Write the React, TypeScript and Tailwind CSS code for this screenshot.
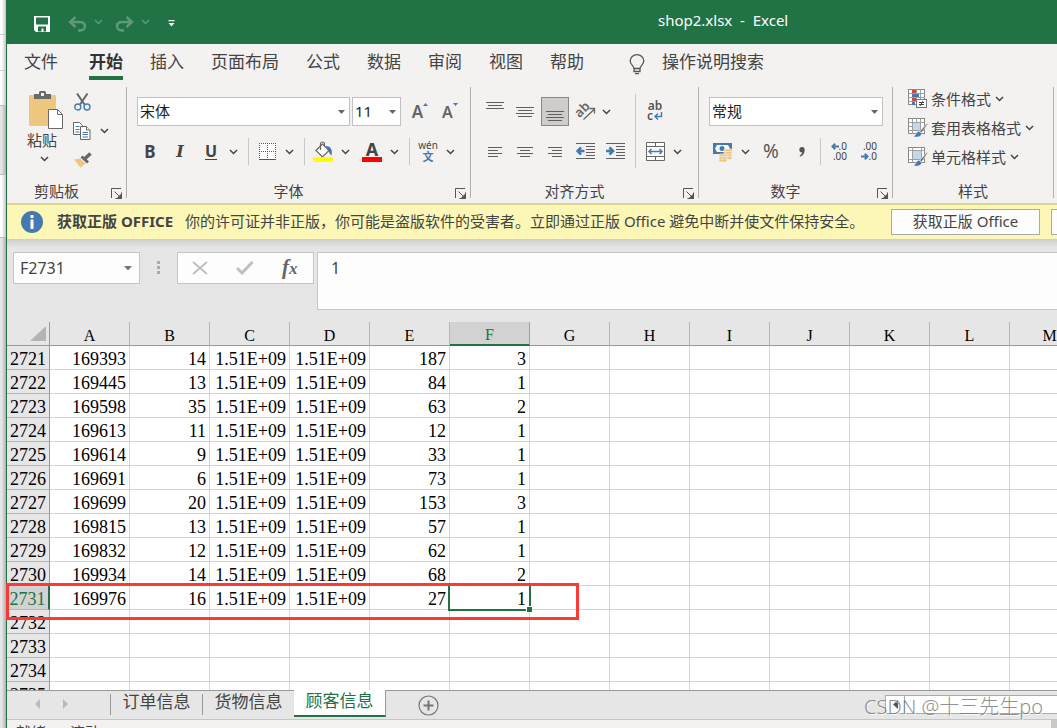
import React from "react";

type Kids = { children?: React.ReactNode };

const COLS = ["A", "B", "C", "D", "E", "F", "G", "H", "I", "J", "K", "L", "M"];

const ROWS: { n: number; v: string[] }[] = [
  { n: 2721, v: ["169393", "14", "1.51E+09", "1.51E+09", "187", "3"] },
  { n: 2722, v: ["169445", "13", "1.51E+09", "1.51E+09", "84", "1"] },
  { n: 2723, v: ["169598", "35", "1.51E+09", "1.51E+09", "63", "2"] },
  { n: 2724, v: ["169613", "11", "1.51E+09", "1.51E+09", "12", "1"] },
  { n: 2725, v: ["169614", "9", "1.51E+09", "1.51E+09", "33", "1"] },
  { n: 2726, v: ["169691", "6", "1.51E+09", "1.51E+09", "73", "1"] },
  { n: 2727, v: ["169699", "20", "1.51E+09", "1.51E+09", "153", "3"] },
  { n: 2728, v: ["169815", "13", "1.51E+09", "1.51E+09", "57", "1"] },
  { n: 2729, v: ["169832", "12", "1.51E+09", "1.51E+09", "62", "1"] },
  { n: 2730, v: ["169934", "14", "1.51E+09", "1.51E+09", "68", "2"] },
  { n: 2731, v: ["169976", "16", "1.51E+09", "1.51E+09", "27", "1"] },
  { n: 2732, v: [] },
  { n: 2733, v: [] },
  { n: 2734, v: [] },
  { n: 2735, v: [] },
];

const TABS = ["开始", "插入", "页面布局", "公式", "数据", "审阅", "视图", "帮助"];

function ChevronMark({ className = "text-[#444]" }: { className?: string }) {
  return (
    <svg width="9" height="6" viewBox="0 0 9 6" fill="none" stroke="currentColor" strokeWidth="1.5" className={className}>
      <path d="M1 1l3.5 3.5L8 1" />
    </svg>
  );
}

function Chev({ label }: { label: string }) {
  return (
    <button aria-label={label} className="flex h-[29px] w-3 shrink-0 items-center justify-center">
      <ChevronMark />
    </button>
  );
}

function Tool({ label, wide, children }: Kids & { label: string; wide?: boolean }) {
  return (
    <button
      aria-label={label}
      className={
        wide
          ? "flex h-[29px] w-8 shrink-0 items-center justify-center"
          : "flex h-[29px] w-[30px] shrink-0 items-center justify-center"
      }
    >
      {children}
    </button>
  );
}

function Split({ label, children }: Kids & { label: string }) {
  return (
    <div className="flex shrink-0">
      <Tool label={label} wide>
        {children}
      </Tool>
      <Chev label={label + "选项"} />
    </div>
  );
}

function Sep() {
  return <div className="h-[27px] w-px shrink-0 bg-[#c8c8c8]" />;
}

function Group({ title, width, launcher = true, children }: Kids & { title: string; width: string; launcher?: boolean }) {
  return (
    <section className={"flex h-[111px] shrink-0 flex-col border-r border-[#b2b0ae] " + width}>
      {children}
      <div className="mt-auto flex h-[13px] items-center text-[15px] leading-[15px]">
        <span className="flex-1 text-center">{title}</span>
        {launcher && (
          <button aria-label={title + "设置"} className="flex w-5 justify-center pt-[3px]">
            <svg width="11" height="11" viewBox="0 0 11 11" fill="none" stroke="#555" strokeWidth="1">
              <path d="M.5 10V.5H10M3.5 3.5l6 6M10.500 4.500v6h-6" />
              <path d="M6 10.500h4.500V6z" fill="#555" />
            </svg>
          </button>
        )}
      </div>
    </section>
  );
}

function Combo({ label, value, width }: { label: string; value: string; width: string }) {
  return (
    <div className={"relative h-[29px] shrink-0 " + width}>
      <select
        aria-label={label}
        className="h-full w-full appearance-none border border-[#c3c1bf] bg-white pl-[2px] text-[15px] text-[#1e1e1e] outline-none"
      >
        <option>{value}</option>
      </select>
      <svg width="7" height="4" viewBox="0 0 7 4" className="pointer-events-none absolute right-[5px] top-[13px]">
        <path d="M0 0h7L3.500 4z" fill="#666" />
      </svg>
    </div>
  );
}

function Lines({ rows, width, height }: { rows: [number, number, number][]; width: number; height: number }) {
  return (
    <svg width={width} height={height} viewBox={`0 0 ${width} ${height}`} shapeRendering="crispEdges">
      {rows.map(([x, y, w]) => (
        <rect key={y} x={x} y={y} width={w} height="1" fill="#5f5f5f" />
      ))}
    </svg>
  );
}

function Indent({ right }: { right?: boolean }) {
  return (
    <svg width="19" height="17" viewBox="0 0 19 17">
      <g fill="#5f5f5f" shapeRendering="crispEdges">
        <rect x="0" y="0" width="19" height="1" />
        <rect x="10" y="3" width="9" height="1" />
        <rect x="10" y="6" width="9" height="1" />
        <rect x="10" y="9" width="9" height="1" />
        <rect x="10" y="12" width="9" height="1" />
        <rect x="0" y="15" width="19" height="1" />
      </g>
      <path
        d={right ? "M0 8h6M3.500 4.500L7 8l-3.500 3.500" : "M8.500 8H2.500M5 4.500L1.500 8 5 11.500"}
        fill="none"
        stroke="#4579b2"
        strokeWidth="2.600"
      />
    </svg>
  );
}

function GridIcon({ kind }: { kind: "cond" | "table" | "cell" }) {
  return (
    <svg width="20" height="20" viewBox="0 0 20 20" className="shrink-0">
      <rect x=".5" y=".5" width="16" height="15" fill="#fff" stroke="#888" />
      {kind === "cond" ? (
        <g>
          <path d="M.5 4.500h16M.5 8.500h16M.5 12.500h16M4.500 .5v15M8.500 .5v15M12.500 .5v15" stroke="#a0a0a0" />
          <rect x="4" y="1" width="4" height="3" fill="#d1492e" />
          <rect x="4" y="5" width="7" height="3" fill="#4579b2" />
          <rect x="4" y="9" width="4" height="3" fill="#d1492e" />
          <rect x="4" y="13" width="3" height="3" fill="#4579b2" />
          <rect x="8.500" y="10.500" width="10" height="8" fill="#fff" stroke="#777" />
          <path d="M11 13.500h5M11 15.500h5M15 12l-3 5" stroke="#444" />
        </g>
      ) : (
        <g>
          {kind === "table" ? (
            <g>
              <rect x="5" y="5" width="8" height="8" fill="#c3d8ee" />
              <path d="M.5 4.500h16M.5 8.500h4M.5 12.500h16M4.500 .5v15M8.500 .5v4M12.500 .5v15" stroke="#a0a0a0" />
            </g>
          ) : (
            <g>
              <path d="M.5 3.500h16M.5 12.500h16M4.500 .5v15M13.500 .5v15" stroke="#a0a0a0" />
              <rect x="5" y="4" width="8" height="8" fill="#c3d8ee" />
            </g>
          )}
          <path d="M19.200 5.200l-7.400 8 1.700 1.600 6-8.600z" fill="#666" stroke="#f3f2f1" strokeWidth=".6" />
          <path d="M11 13.200c-3 0-2.500 4-5.500 5.300 3 1.300 8.300.5 8-3.200z" fill="#4579b2" stroke="#f3f2f1" strokeWidth=".5" />
        </g>
      )}
    </svg>
  );
}

function StyleButton({ kind, text }: { kind: "cond" | "table" | "cell"; text: string }) {
  return (
    <button className="flex h-6 items-center text-[15px]">
      <GridIcon kind={kind} />
      <span className="ml-[3px] mr-1">{text}</span>
      <ChevronMark />
    </button>
  );
}

function TitleBar() {
  return (
    <header className="flex h-11 shrink-0 items-center bg-[#217346]">
      <div className="flex w-[651px] shrink-0 items-center pl-[27px] pt-[3px]">
        <button aria-label="保存">
          <svg width="16" height="16" viewBox="0 0 16 16">
            <path d="M0 0h16v16H2l-2-2z" fill="#fff" />
            <path d="M2 1.500h12v7H2zM4 10.500h8v5H9.500V12.500h-2v3H4z" fill="#217346" />
          </svg>
        </button>
        <button aria-label="撤消" className="ml-[18px]">
          <svg width="19" height="16" viewBox="0 0 19 16" fill="none" stroke="#5d9a79" strokeWidth="2.400">
            <path d="M7.500 1L2 6l5.500 5M2.500 6h9c3.500 0 5.500 1.800 5.500 4.300s-2 4.200-5 4.200h-2" />
          </svg>
        </button>
        <button aria-label="撤消选项" className="ml-[7px] pb-[3px]">
          <ChevronMark className="text-[#5d9a79]" />
        </button>
        <button aria-label="恢复" className="ml-3">
          <svg width="19" height="16" viewBox="0 0 19 16" fill="none" stroke="#5d9a79" strokeWidth="2.400">
            <path d="M11.500 1L17 6l-5.500 5M16.500 6h-9C4 6 2 7.800 2 10.300s2 4.200 5 4.200h2" />
          </svg>
        </button>
        <button aria-label="恢复选项" className="ml-[7px] pb-[3px]">
          <ChevronMark className="text-[#5d9a79]" />
        </button>
        <button aria-label="自定义快速访问工具栏" className="ml-[18px]">
          <svg width="7" height="7" viewBox="0 0 7 7" fill="#fff">
            <path d="M.5 0h6v1.300h-6zM.5 3h6L3.500 6.500z" />
          </svg>
        </button>
      </div>
      <h1 className="whitespace-pre pb-1 text-[15px] text-white">shop2.xlsx  -  Excel</h1>
    </header>
  );
}

function Tabs() {
  return (
    <nav className="flex h-9 shrink-0 items-stretch gap-[27px] whitespace-nowrap pl-[17px] text-[17px] text-[#444]">
      <button className="mr-1 border-b-4 border-transparent pt-1">文件</button>
      {TABS.map((t) => (
        <button
          key={t}
          className={
            t === "开始"
              ? "border-b-4 border-[#217346] pt-1 font-bold text-[#333]"
              : "border-b-4 border-transparent pt-1"
          }
        >
          {t}
        </button>
      ))}
      <button className="ml-[18px] flex items-center gap-[17px] border-b-4 border-transparent pt-1">
        <svg width="16" height="21" viewBox="0 0 16 21" fill="none" stroke="#555" strokeWidth="1.300" className="mt-1">
          <path d="M5 14.500c0-3-3.800-3.500-3.800-7.500a6.800 6.300 0 0 1 13.600 0c0 4-3.800 4.500-3.800 7.500zM5 14.500v3h6v-3M6 19.700h4" />
        </svg>
        操作说明搜索
      </button>
    </nav>
  );
}

function Clipboard() {
  return (
    <Group title="剪贴板" width="w-[120px]">
      <div className="flex pl-[15px]">
        <button className="flex w-11 flex-col items-center pt-1 text-[15px] leading-5">
          <svg width="35" height="38" viewBox="0 0 35 38" className="ml-1">
            <rect x="0" y="4" width="27" height="31" rx="1" fill="#eec77e" />
            <path d="M5 8V3h5V1.500Q10 0 11.500 0h4Q17 0 17 1.500V3h5v5z" fill="#6a6a6a" />
            <rect x="12" y="2" width="3" height="3" fill="#f3f2f1" />
            <path d="M19.500 18.500h9l5 5v14h-14z" fill="#fff" stroke="#6a6a6a" />
            <path d="M28.500 18.500v5h5" fill="none" stroke="#6a6a6a" />
          </svg>
          <span className="mr-1 mt-px">粘贴</span>
          <span className="mt-[6px]">
            <ChevronMark />
          </span>
        </button>
        <div>
          <Tool label="剪切" wide>
            <svg width="17" height="18" viewBox="0 0 17 18" fill="none">
              <path d="M3 .5l7.500 11M13.500 .5L6 11.500" stroke="#666" strokeWidth="2" />
              <circle cx="3.800" cy="14" r="3" stroke="#4579b2" strokeWidth="1.400" />
              <circle cx="13" cy="14" r="3" stroke="#4579b2" strokeWidth="1.400" />
            </svg>
          </Tool>
          <Split label="复制">
            <svg width="18" height="18" viewBox="0 0 18 18" fill="#fff" stroke="#666">
              <path d="M.5 .5h6l3 3v9h-9z" />
              <path d="M2.500 4.500h4M2.500 7.500h4M2.500 10h4" stroke="#4579b2" />
              <path d="M7.500 4.500h6l3.500 3.500v9.500H7.500z" />
              <path d="M13.500 4.500v3.500h3.500" />
              <path d="M9.500 10.500h5.500M9.500 12.500h5.500M9.500 15h5.500" stroke="#4579b2" />
            </svg>
          </Split>
          <Tool label="格式刷" wide>
            <svg width="19" height="16" viewBox="0 0 19 16">
              <path d="M1 7.500l6-1 5.500 5L7.500 15.500z" fill="#eec77e" />
              <path d="M7.500 5.500l2-2 6.500 6-2 2z" fill="#666" />
              <path d="M12 6.500L17.500 1.500" stroke="#666" strokeWidth="3.600" />
            </svg>
          </Tool>
        </div>
      </div>
    </Group>
  );
}

function FontGroup() {
  return (
    <Group title="字体" width="w-[344px]">
      <div className="flex gap-[2px] pl-[10px] pt-[10px]">
        <Combo label="字体" value="宋体" width="w-[213px]" />
        <Combo label="字号" value="11" width="w-[49px]" />
        <div className="flex pl-[2px] font-semibold text-[#666]">
          <Tool label="增大字号">
            <span className="pt-px text-[17px]">A</span>
            <svg width="5" height="3" viewBox="0 0 5 3" className="mb-[14px]">
              <path d="M0 3h5L2.500 0z" fill="#4579b2" />
            </svg>
          </Tool>
          <Tool label="减小字号">
            <span className="pt-px text-[16px]">A</span>
            <svg width="5" height="3" viewBox="0 0 5 3" className="mb-[14px]">
              <path d="M0 0h5L2.500 3z" fill="#4579b2" />
            </svg>
          </Tool>
        </div>
      </div>
      <div className="mt-[11px] flex items-center pl-2">
        <Tool label="加粗">
          <span className="text-[17px] font-bold">B</span>
        </Tool>
        <Tool label="倾斜">
          <span className="font-['DejaVu_Serif',serif] text-[16px] font-bold italic">I</span>
        </Tool>
        <Split label="下划线">
          <span className="border-b border-[#444] text-[16px] font-bold leading-4">U</span>
        </Split>
        <div className="ml-[9px]">
          <Sep />
        </div>
        <div className="ml-[2px] mr-[9px]">
          <Split label="边框">
            <svg width="17" height="17" viewBox="0 0 17 17" fill="none" stroke="#555" shapeRendering="crispEdges">
              <rect width="17" height="17" fill="#fff" stroke="none" />
              <path d="M0 .5h17M0 8.500h17M.5 0v17M8.500 0v17M16.500 0v17" strokeDasharray="1 1" />
              <path d="M0 16.500h17" />
            </svg>
          </Split>
        </div>
        <Sep />
        <div className="ml-[2px] mr-[5px]">
          <Split label="填充颜色">
            <svg width="20" height="21" viewBox="0 0 20 21">
              <path d="M13 5c4 0 7 3 5.500 9.500-2.500-1.500-2.500-5-5.500-9z" fill="#4579b2" />
              <path d="M3 9.500L9.500 3l6.500 6.500L9.500 16z" fill="#fff" stroke="#666" strokeWidth="1.200" />
              <path d="M7.500 9V3a2 2 0 0 1 4 0v3" fill="none" stroke="#666" strokeWidth="1.200" />
              <rect y="16" width="20" height="5" fill="#ff0" />
            </svg>
          </Split>
        </div>
        <div className="mr-[9px]">
          <Split label="字体颜色">
            <span className="flex w-5 flex-col items-center border-b-[5px] border-[#f00] text-[18px] font-bold leading-4">A</span>
          </Split>
        </div>
        <Sep />
        <div className="ml-[2px]">
          <Split label="拼音指南">
            <span className="flex flex-col items-center text-[10px] leading-[8px]">
              wén
              <span className="pt-[2px] text-[11px] font-semibold leading-3 text-[#4579b2]">文</span>
            </span>
          </Split>
        </div>
      </div>
    </Group>
  );
}

function AlignGroup() {
  return (
    <Group title="对齐方式" width="w-[228px]">
      <div className="flex pl-[9px]">
        <div className="w-[155px]">
          <div className="flex pt-[10px]">
            <Tool label="顶端对齐">
              <span className="mb-3">
                <Lines width={18} height={8} rows={[[0, 0, 18], [2, 3, 14], [0, 6, 18]]} />
              </span>
            </Tool>
            <Tool label="垂直居中">
              <Lines width={18} height={10} rows={[[0, 0, 18], [2, 3, 14], [0, 6, 18], [2, 9, 14]]} />
            </Tool>
            <button
              aria-label="底端对齐"
              aria-pressed="true"
              className="mx-px flex h-[29px] w-7 items-center justify-center border border-[#8a8886] bg-[#cfcdcb] pt-2"
            >
              <Lines width={18} height={10} rows={[[0, 0, 18], [2, 3, 14], [0, 6, 18], [2, 9, 14]]} />
            </button>
            <Tool label="方向">
              <svg width="24" height="24" viewBox="-1 -4 24 24" className="overflow-visible">
                <text
                  x="3"
                  y="12"
                  transform="rotate(-45 7 10)"
                  fontSize="13"
                  fontWeight="600"
                  fill="#666"
                  fontFamily="Noto Sans"
                >
                  ab
                </text>
                <path d="M9.500 15.500L20 5.500M15.500 4.500H20.500v5" fill="none" stroke="#666" strokeWidth="1.300" />
              </svg>
            </Tool>
            <Chev label="方向选项" />
          </div>
          <div className="flex pt-[11px]">
            <Tool label="左对齐">
              <Lines width={14} height={10} rows={[[0, 0, 14], [0, 3, 10], [0, 6, 14], [0, 9, 10]]} />
            </Tool>
            <Tool label="居中">
              <Lines width={16} height={10} rows={[[0, 0, 16], [3, 3, 10], [0, 6, 16], [3, 9, 10]]} />
            </Tool>
            <Tool label="右对齐">
              <Lines width={14} height={10} rows={[[0, 0, 14], [4, 3, 10], [0, 6, 14], [4, 9, 10]]} />
            </Tool>
            <Tool label="减少缩进量">
              <Indent />
            </Tool>
            <Tool label="增加缩进量">
              <Indent right />
            </Tool>
          </div>
        </div>
        <div className="mt-[7px] h-[74px] w-px bg-[#c8c8c8]" />
        <div className="ml-[3px] pt-[10px]">
          <Tool label="自动换行" wide>
            <span className="flex flex-col pb-[2px] text-[12px] font-semibold leading-[10px] text-[#555]">
              ab
              <span className="flex items-center">
                c
                <svg width="9" height="8" viewBox="0 0 9 8" fill="none" stroke="#4579b2" strokeWidth="1.400" className="ml-px mt-px">
                  <path d="M7.500 0v4.500H1.500M4 1.500L1 4.500l3 3" />
                </svg>
              </span>
            </span>
          </Tool>
          <div className="mt-[11px]">
            <Split label="合并后居中">
              <svg width="19" height="19" viewBox="0 0 19 19" fill="#fff" stroke="#666">
                <path d="M.5 .5h18v18H.5zM.5 4.500h18M.5 14.500h18M9.500 .5v4M9.500 14.500v4" />
                <path d="M3 9.500h13M5.500 7L3 9.500 5.500 12M13.500 7l2.500 2.500-2.500 2.500" fill="none" stroke="#4579b2" strokeWidth="1.500" />
              </svg>
            </Split>
          </div>
        </div>
      </div>
    </Group>
  );
}

function Decimal({ more }: { more?: boolean }) {
  const arrow = (
    <svg width="8" height="7" viewBox="0 0 8 7" fill="none" stroke="#4579b2" strokeWidth="2">
      <path d={more ? "M8 3.500H2M4.200 .8L1.500 3.500l2.700 2.700" : "M0 3.500h6M3.800 .8l2.700 2.700-2.700 2.700"} />
    </svg>
  );
  return (
    <span className="flex w-4 flex-col items-end pb-px text-[10px] leading-[10px] text-[#444]">
      <span className="flex items-center">
        {more && arrow}
        {more ? ".0" : ".00"}
      </span>
      <span className="flex items-center">
        {!more && arrow}
        {more ? ".00" : ".0"}
      </span>
    </span>
  );
}

function NumberGroup() {
  return (
    <Group title="数字" width="w-[194px]">
      <div className="flex pl-[10px] pt-[10px]">
        <Combo label="数字格式" value="常规" width="w-[174px]" />
      </div>
      <div className="mt-[11px] flex items-center pl-2">
        <Split label="会计数字格式">
          <svg width="20" height="20" viewBox="0 0 20 20">
            <rect x="0" y="1" width="19" height="11" fill="#4579b2" />
            <path d="M2 6.500l2-3.500h11l2 3.500-2 3.500H4z" fill="#fff" />
            <circle cx="9" cy="6.500" r="2.500" fill="#4579b2" />
            <g fill="#eec77e" stroke="#f3f2f1" strokeWidth=".7">
              <rect x="11" y="7" width="8" height="3" rx="1.300" />
              <rect x="11" y="9.500" width="8" height="3" rx="1.300" />
              <rect x="11" y="12" width="8" height="3" rx="1.300" />
              <rect x="11" y="14.500" width="8" height="3" rx="1.300" />
              <rect x="6" y="12" width="8" height="3" rx="1.300" />
              <rect x="6" y="14.500" width="8" height="3" rx="1.300" />
              <rect x="6" y="17" width="8" height="3" rx="1.300" />
            </g>
          </svg>
        </Split>
        <div className="ml-1">
          <Tool label="百分比样式" wide>
            <span className="text-[19px] text-[#555]">%</span>
          </Tool>
        </div>
        <Tool label="千位分隔样式">
          <svg width="6" height="10" viewBox="0 0 6 10">
            <path d="M3 0a2.600 2.600 0 0 1 2.700 2.700C5.700 6 4 8.700 1 9.800L.6 8.900C2.200 8 3 6.800 3 5.300A2.600 2.600 0 0 1 3 0z" fill="#555" />
          </svg>
        </Tool>
        <div className="ml-[3px] mr-[3px]">
          <Sep />
        </div>
        <Tool label="增加小数位数">
          <Decimal more />
        </Tool>
        <Tool label="减少小数位数">
          <Decimal />
        </Tool>
      </div>
    </Group>
  );
}

function Ribbon() {
  return (
    <div className="flex shrink-0 overflow-hidden whitespace-nowrap border-b border-[#cfcdcb] pb-[5px] pt-[7px]">
      <Clipboard />
      <FontGroup />
      <AlignGroup />
      <NumberGroup />
      <Group title="样式" width="w-[161px]" launcher={false}>
        <div className="flex flex-col items-start gap-[5px] pl-[15px]">
          <StyleButton kind="cond" text="条件格式" />
          <StyleButton kind="table" text="套用表格格式" />
          <StyleButton kind="cell" text="单元格样式" />
        </div>
      </Group>
    </div>
  );
}

function Banner() {
  return (
    <div className="flex h-9 shrink-0 items-center overflow-hidden whitespace-nowrap border-y border-[#d8d68a] bg-[#fcf7b6] pl-[14px] text-[15px]">
      <svg width="22" height="22" viewBox="0 0 22 22" className="shrink-0">
        <circle cx="11" cy="11" r="11" fill="#4579b2" />
        <path d="M9.500 4h3v3h-3zM9.500 8.500h3V18h-3z" fill="#fff" />
      </svg>
      <strong className="ml-[14px] w-32 shrink-0 pb-[2px]">获取正版 OFFICE</strong>
      <span className="w-[706px] shrink-0 pb-[2px]">
        你的许可证并非正版，你可能是盗版软件的受害者。立即通过正版 Office 避免中断并使文件保持安全。
      </span>
      <button className="h-[26px] w-[149px] shrink-0 border border-[#ababab] bg-[#fdfdfd] pb-[2px] leading-[22px]">
        获取正版 Office
      </button>
      <button aria-label="了解更多" className="ml-[11px] h-[26px] w-[100px] shrink-0 border border-[#ababab] bg-[#fdfdfd]" />
    </div>
  );
}

function FormulaBar() {
  return (
    <div className="flex h-[82px] shrink-0 items-start bg-[linear-gradient(#cfcfcf,#e6e6e6_8px)] pl-[6px] pt-3">
      <div className="flex h-8 w-[127px] shrink-0 items-center border border-[#c6c6c6] bg-[#fdfdfd] pr-[7px]">
        <input aria-label="名称框" defaultValue="F2731" className="min-w-0 flex-1 bg-transparent pl-[6px] text-[16px] outline-none" />
        <svg width="8" height="5" viewBox="0 0 8 5">
          <path d="M0 0h8L4 4.500z" fill="#777" />
        </svg>
      </div>
      <svg width="3" height="13" viewBox="0 0 3 13" fill="#aaa" className="ml-[17px] mt-[9px] shrink-0">
        <path d="M0 0h3v3H0zM0 5h3v3H0zM0 10h3v3H0z" />
      </svg>
      <div className="ml-[17px] flex h-8 w-[137px] shrink-0 items-center border border-[#c6c6c6] bg-[#fdfdfd] pl-[14px]">
        <button aria-label="取消">
          <svg width="16" height="14" viewBox="0 0 16 14" fill="none" stroke="#c0c0c0" strokeWidth="2">
            <path d="M1 1l14 12M15 1L1 13" />
          </svg>
        </button>
        <button aria-label="输入" className="ml-[28px]">
          <svg width="18" height="14" viewBox="0 0 18 14" fill="none" stroke="#c0c0c0" strokeWidth="3">
            <path d="M1 7l5 5L16.500 1" />
          </svg>
        </button>
        <button
          aria-label="插入函数"
          className="ml-7 font-['Liberation_Serif',serif] text-[21px] font-bold italic leading-6 text-[#666]"
        >
          f<span className="text-[17px]">x</span>
        </button>
      </div>
      <textarea
        aria-label="编辑栏"
        defaultValue="1"
        className="ml-[3px] h-[58px] min-w-0 flex-1 resize-none border border-r-0 border-[#c6c6c6] bg-[#fdfdfd] pl-[13px] pt-[3px] text-[16px] leading-6 outline-none"
      />
    </div>
  );
}

function Sheet() {
  return (
    <main className="relative min-h-0 flex-1 bg-white font-['Liberation_Serif','Noto_Sans_CJK_SC',serif] text-black">
      <div className="h-full overflow-hidden">
        <table className="w-[1083px] table-fixed border-separate border-spacing-0 text-[18px] leading-[19px]">
          <thead>
            <tr className="h-6">
              <th aria-label="全选" className="w-[43px] border-b border-r border-[#999] bg-[#e6e6e6] p-0">
                <svg width="16" height="15" viewBox="0 0 16 15" className="ml-auto mr-[3px]">
                  <path d="M16 0v15H0z" fill="#b4b4b4" />
                </svg>
              </th>
              {COLS.map((c) => (
                <th
                  key={c}
                  scope="col"
                  className={
                    c === "F"
                      ? "h-6 w-20 border-b-2 border-r border-b-[#217346] border-r-[#a0a0a0] bg-[#d2d2d2] p-0 pt-[3px] text-[16px] font-normal text-[#217346]"
                      : "h-6 w-20 border-b border-r border-b-[#999] border-r-[#b5b5b5] bg-[#e6e6e6] p-0 pt-[3px] text-[16px] font-normal"
                  }
                >
                  {c}
                </th>
              ))}
            </tr>
          </thead>
          <tbody>
            {ROWS.map((r) => (
              <tr key={r.n} className="h-6">
                <th
                  scope="row"
                  className={
                    r.n === 2731
                      ? "h-6 border-b border-r-2 border-b-[#b5b5b5] border-r-[#217346] bg-[#d2d2d2] p-0 pt-1 font-normal text-[#217346]"
                      : "h-6 border-b border-r border-b-[#b5b5b5] border-r-[#999] bg-[#e6e6e6] p-0 pt-1 font-normal"
                  }
                >
                  {r.n}
                </th>
                {COLS.map((c, i) => {
                  const active = r.n === 2731 && c === "F";
                  return (
                    <td
                      key={c}
                      className={
                        active
                          ? "relative h-6 border-b border-r border-[#d4d4d4] p-0 pr-[3px] pt-1 text-right"
                          : "h-6 border-b border-r border-[#d4d4d4] p-0 pr-[3px] pt-1 text-right"
                      }
                    >
                      {r.v[i]}
                      {active && (
                        <span className="absolute -bottom-[2px] -left-[2px] -right-[2px] -top-[2px] border-2 border-[#217346]">
                          <span className="absolute -bottom-[4px] -right-[4px] size-[7px] border border-white bg-[#217346]" />
                        </span>
                      )}
                    </td>
                  );
                })}
              </tr>
            ))}
          </tbody>
        </table>
      </div>
      <div className="pointer-events-none absolute -left-px top-[261px] h-[37px] w-[573px] border-[3px] border-[#fb3a36]" />
    </main>
  );
}

function SheetTabs() {
  return (
    <footer className="shrink-0">
      <div className="relative flex h-[30px] items-start border-b border-t border-b-[#c6c6c6] border-t-[#999] bg-[#e6e6e6] text-[17px] leading-[22px]">
        <div className="flex w-[103px] shrink-0 gap-[23px] pl-7 pt-[8px]">
          <button aria-label="上一张">
            <svg width="5" height="10" viewBox="0 0 5 10">
              <path d="M5 0v10L0 5z" fill="#bbb" />
            </svg>
          </button>
          <button aria-label="下一张">
            <svg width="5" height="10" viewBox="0 0 5 10">
              <path d="M0 0v10l5-5z" fill="#bbb" />
            </svg>
          </button>
        </div>
        <button className="mt-[3px] h-[21px] w-[92px] shrink-0 border-l border-[#999]">
          <span className="-mt-[5px] block">订单信息</span>
        </button>
        <button className="mt-[3px] h-[21px] w-[92px] shrink-0 border-l border-[#999]">
          <span className="-mt-[5px] block">货物信息</span>
        </button>
        <button className="-mt-px h-[27px] w-[92px] shrink-0 border-b-2 border-r border-b-[#217346] border-r-[#999] bg-white pb-[3px] leading-[22px] text-[#217346]">
          顾客信息
        </button>
        <button aria-label="新工作表" className="ml-8 mt-1 shrink-0">
          <svg width="21" height="21" viewBox="0 0 21 21" fill="none" stroke="#777">
            <circle cx="10.500" cy="10.500" r="9.500" strokeWidth="1.200" />
            <path d="M10.500 5.500v10M5.500 10.500h10" strokeWidth="2" />
          </svg>
        </button>
        <div className="ml-auto mt-1 flex h-[19px] w-[172px] shrink-0 border border-r-0 border-[#ababab] bg-white">
          <button aria-label="向左滚动" className="flex w-[19px] items-center justify-center border-r border-[#ababab]">
            <svg width="5" height="9" viewBox="0 0 5 9">
              <path d="M5 0v9L0 4.500z" fill="#555" />
            </svg>
          </button>
        </div>
        <div className="pointer-events-none absolute right-[14px] top-1 whitespace-nowrap text-[20px] font-light leading-6 text-[#777] opacity-80 [text-shadow:1px_1px_0_#fff]">
          CSDN @十三先生po
        </div>
      </div>
      <div className="flex h-2 gap-6 overflow-hidden bg-[#f3f2f1] pl-[9px] pt-[2px] text-[15px] leading-5">
        <span>就绪</span>
        <span>滚动</span>
        <span className="-mt-1 ml-auto w-[6px] bg-[#c8c8c8]" />
      </div>
    </footer>
  );
}

export default function App() {
  return (
    <div className="flex h-screen overflow-hidden bg-[#f3f2f1] font-['Noto_Sans','Noto_Sans_CJK_SC',sans-serif] text-[#444]">
      <div className="flex w-[6px] shrink-0 flex-col bg-[linear-gradient(90deg,#fff_30%,#c4c4c4)]">
        <div className="h-[35px] border-b border-[#ccc]" />
        <div className="h-9 border-b border-[#ccc]" />
        <div className="h-[35px] border-b border-[#bbb]" />
        <div className="h-[69px] border-b border-[#bbb] bg-black/10" />
        <div className="h-[63px] border-b border-[#bbb]" />
        <div className="flex-1 bg-black/10" />
      </div>
      <div className="flex min-w-0 flex-1 flex-col border-l border-[#217346]">
        <TitleBar />
        <Tabs />
        <Ribbon />
        <Banner />
        <FormulaBar />
        <Sheet />
        <SheetTabs />
      </div>
    </div>
  );
}
